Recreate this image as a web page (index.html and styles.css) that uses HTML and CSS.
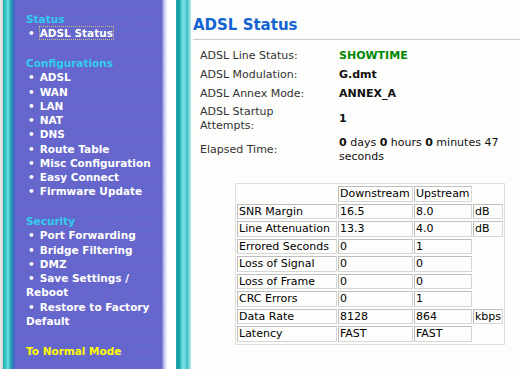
FILE: index.html
```html
<!DOCTYPE html>
<html lang="en">
<head>
    <meta charset="UTF-8">
    <title>ADSL Status</title>
    <link rel="stylesheet" href="styles.css">
</head>
<body>

<!-- Left menu frame -->
<div class="menu-frame">
    <div class="edge-left"></div>
    <div class="menu">
        <div class="menu-title">Status</div>
        <div class="menu-item"><span class="bullet">&bull;</span><span class="current">ADSL Status</span></div>

        <div class="menu-title gap">Configurations</div>
        <div class="menu-item"><span class="bullet">&bull;</span>ADSL</div>
        <div class="menu-item"><span class="bullet">&bull;</span>WAN</div>
        <div class="menu-item"><span class="bullet">&bull;</span>LAN</div>
        <div class="menu-item"><span class="bullet">&bull;</span>NAT</div>
        <div class="menu-item"><span class="bullet">&bull;</span>DNS</div>
        <div class="menu-item"><span class="bullet">&bull;</span>Route Table</div>
        <div class="menu-item"><span class="bullet">&bull;</span>Misc Configuration</div>
        <div class="menu-item"><span class="bullet">&bull;</span>Easy Connect</div>
        <div class="menu-item"><span class="bullet">&bull;</span>Firmware Update</div>

        <div class="menu-title gap">Security</div>
        <div class="menu-item"><span class="bullet">&bull;</span>Port Forwarding</div>
        <div class="menu-item"><span class="bullet">&bull;</span>Bridge Filtering</div>
        <div class="menu-item"><span class="bullet">&bull;</span>DMZ</div>
        <div class="menu-item"><span class="bullet">&bull;</span>Save Settings / Reboot</div>
        <div class="menu-item"><span class="bullet">&bull;</span>Restore to Factory Default</div>

        <div class="menu-mode gap">To Normal Mode</div>
    </div>
    <div class="edge-right"></div>
</div>

<!-- Status content -->
<div class="content">
    <h2 class="page-title">ADSL Status</h2>

    <div class="info">
        <div class="info-label">ADSL Line Status:</div>
        <div class="info-value showtime">SHOWTIME</div>

        <div class="info-label">ADSL Modulation:</div>
        <div class="info-value"><b>G.dmt</b></div>

        <div class="info-label">ADSL Annex Mode:</div>
        <div class="info-value"><b>ANNEX_A</b></div>

        <div class="info-label tall">ADSL Startup Attempts:</div>
        <div class="info-value tall"><b>1</b></div>

        <div class="info-label tall">Elapsed Time:</div>
        <div class="info-value tall"><b>0</b> days <b>0</b> hours <b>0</b> minutes 47 seconds</div>
    </div>

    <table class="stats">
        <colgroup>
            <col class="c-name">
            <col class="c-down">
            <col class="c-up">
            <col class="c-unit">
        </colgroup>
        <tr><td></td><td>Downstream</td><td>Upstream</td><td></td></tr>
        <tr><td>SNR Margin</td><td>16.5</td><td>8.0</td><td>dB</td></tr>
        <tr><td>Line Attenuation</td><td>13.3</td><td>4.0</td><td>dB</td></tr>
        <tr><td>Errored Seconds</td><td>0</td><td>1</td><td></td></tr>
        <tr><td>Loss of Signal</td><td>0</td><td>0</td><td></td></tr>
        <tr><td>Loss of Frame</td><td>0</td><td>0</td><td></td></tr>
        <tr><td>CRC Errors</td><td>0</td><td>1</td><td></td></tr>
        <tr><td>Data Rate</td><td>8128</td><td>864</td><td>kbps</td></tr>
        <tr><td>Latency</td><td>FAST</td><td>FAST</td><td></td></tr>
    </table>
</div>

</body>
</html>
```

FILE: styles.css
```css
/* General styling */
body {
    margin: 0;
    padding: 0;
    height: 369px;
    overflow: hidden;
    display: flex;
    font-family: 'DejaVu Sans', Verdana, sans-serif;
    font-size: 11px;
    background-color: rgb(253, 253, 251);
}

/* Left menu frame */
.menu-frame {
    display: flex;
    width: 191px;
    flex-shrink: 0;
    height: 100%;
}

.edge-left {
    width: 15px;
    background: linear-gradient(to right,
        rgb(236, 236, 236) 0px, rgb(210, 214, 214) 3px,
        rgb(40, 170, 170) 3px, rgb(60, 200, 200) 6px,
        rgb(110, 225, 225) 8px, rgb(30, 160, 175) 11px,
        rgb(50, 120, 190) 13px, rgb(80, 90, 200) 15px);
}

.menu {
    width: 147px;
    padding: 12px 0 0 11px;
    box-sizing: border-box;
    background-color: rgb(102, 102, 204);
    background-image: radial-gradient(circle, rgba(60, 110, 210, 0.7) 0.6px, transparent 1px);
    background-size: 3px 14.25px;
    background-position: 0 10px;
    font-size: 10.5px;
    font-weight: bold;
    line-height: 14.25px;
    color: white;
}

.edge-right {
    width: 29px;
    background: linear-gradient(to right,
        rgb(120, 120, 215) 0px, rgb(190, 190, 240) 2px,
        rgb(235, 235, 250) 4px, rgb(255, 255, 255) 6px,
        rgb(255, 255, 255) 14px, rgb(30, 170, 175) 14px,
        rgb(20, 150, 160) 17px, rgb(70, 205, 210) 19px,
        rgb(130, 225, 230) 22px, rgb(60, 190, 200) 25px,
        rgb(190, 240, 240) 29px);
}

.menu-title {
    color: rgb(51, 204, 238);
}

.menu-mode {
    color: rgb(255, 255, 0);
}

.gap {
    margin-top: 15.5px;
}

.bullet {
    padding: 0 5px 0 2px;
}

.current {
    outline: 1px dotted rgb(200, 190, 130);
}

/* Status content */
.content {
    flex: 1;
    padding: 16px 0 0 2px;
}

.page-title {
    margin: 0;
    padding-bottom: 5px;
    font-size: 15px;
    line-height: 18px;
    color: rgb(20, 100, 210);
    border-bottom: 1px solid rgb(204, 204, 204);
}

.info {
    display: grid;
    grid-template-columns: 125px 180px;
    column-gap: 14px;
    margin: 6px 0 0 7px;
    line-height: 14px;
}

.info-label,
.info-value {
    padding: 2.5px 0;
    align-self: center;
}

.info-label.tall,
.info-value.tall {
    padding: 1.5px 0;
}

.info-label {
    color: rgb(51, 51, 51);
}

.info-value {
    color: rgb(17, 17, 17);
}

.showtime {
    font-weight: bold;
    color: rgb(0, 136, 0);
}

/* Table styling */
.stats {
    margin: 18px 0 0 42px;
    table-layout: fixed;
    width: 270px;
    border: 1px solid rgb(222, 222, 222);
    border-spacing: 1px 2px;
    empty-cells: hide;
    font-size: 11px;
}

.c-name { width: 100px; }
.c-down { width: 75px; }
.c-up { width: 58px; }
.c-unit { width: 30px; }

.stats td {
    padding: 0 1px;
    line-height: 13.5px;
    white-space: nowrap;
    overflow: hidden;
    border: 1px solid rgb(214, 214, 214);
    border-top-color: rgb(190, 190, 190);
    border-left-color: rgb(190, 190, 190);
    color: black;
}
```
